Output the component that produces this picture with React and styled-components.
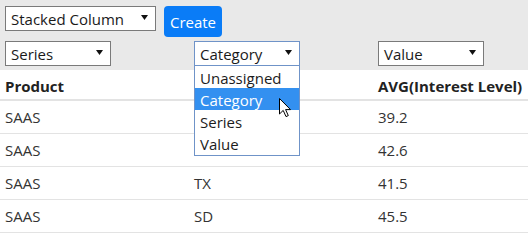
import React from 'react';
import styled, { createGlobalStyle } from 'styled-components';

const GlobalStyle = createGlobalStyle`
  body {
    margin: 0;
    font-family: "Open Sans", "Noto Sans", "Liberation Sans", sans-serif;
    background: #fff;
  }
`;

const rows = [
  ['SAAS', 'CA', '39.2'],
  ['SAAS', 'NY', '42.6'],
  ['SAAS', 'TX', '41.5'],
  ['SAAS', 'SD', '45.5'],
];

const options = ['Unassigned', 'Category', 'Series', 'Value'];

function SelectBox({ value, width, focused, open }) {
  return (
    <Holder>
      <Select $width={width} $focused={focused}>
        <span>{value}</span>
        <svg width="7" height="5" viewBox="0 0 7 5">
          <polygon points="0,0 7,0 3.5,5" fill="#111" />
        </svg>
      </Select>
      {open && (
        <OptionList>
          {options.map((o) => (
            <Option key={o} $active={o === value}>
              {o}
            </Option>
          ))}
        </OptionList>
      )}
    </Holder>
  );
}

function App() {
  return (
    <Page>
      <GlobalStyle />
      <Toolbar>
        <ToolRow>
          <SelectBox value="Stacked Column" width={151} />
          <CreateBtn>Create</CreateBtn>
        </ToolRow>
        <FieldRow>
          <SelectBox value="Series" width={106} />
          <SelectBox value="Category" width={106} focused open />
          <SelectBox value="Value" width={106} />
        </FieldRow>
      </Toolbar>
      <Table>
        <HeadCell>Product</HeadCell>
        <HeadCell />
        <HeadCell>AVG(Interest Level)</HeadCell>
        {rows.map((r, i) =>
          r.map((c, j) => <Cell key={i + '-' + j}>{c}</Cell>)
        )}
      </Table>
      <Cursor width="13" height="20" viewBox="0 0 13 20">
        <path
          d="M0.5,0.5 L0.5,16 L4.2,12.4 L7,18.6 L9.3,17.6 L6.6,11.6 L11.5,11.6 Z"
          fill="#fff"
          stroke="#000"
          strokeWidth="1"
          strokeLinejoin="round"
        />
      </Cursor>
    </Page>
  );
}

const Page = styled.div`
  position: relative;
  width: 528px;
  height: 236px;
  overflow: hidden;
`;

const Toolbar = styled.div`
  background: #e9e9e9;
  padding: 6px 5px 4px;
`;

const ToolRow = styled.div`
  display: flex;
  align-items: flex-start;
  gap: 8px;
`;

const FieldRow = styled.div`
  display: grid;
  grid-template-columns: 189px 184px 1fr;
  margin-top: 4px;
`;

const Holder = styled.div`
  position: relative;
`;

const Select = styled.div`
  box-sizing: border-box;
  width: ${(p) => p.$width}px;
  height: 25px;
  border: 1px solid ${(p) => (p.$focused ? '#6f93c8' : '#7a7a7a')};
  background: #fff;
  display: flex;
  align-items: center;
  justify-content: space-between;
  padding: 0 7px 0 5px;
  font-size: 15px;
  color: #1a1a1a;

  svg {
    margin-bottom: 2px;
  }
`;

const OptionList = styled.div`
  position: absolute;
  top: 100%;
  left: 0;
  width: 106px;
  box-sizing: border-box;
  border: 1px solid #6f93c8;
  border-top: none;
  background: #fff;
  z-index: 5;
  padding-bottom: 1px;
`;

const Option = styled.div`
  height: 22px;
  line-height: 24px;
  padding-left: 5px;
  font-size: 15px;
  color: ${(p) => (p.$active ? '#fff' : '#1c1c1c')};
  background: ${(p) => (p.$active ? '#3390f0' : 'transparent')};
`;

const CreateBtn = styled.button`
  width: 58px;
  height: 31px;
  border: none;
  border-radius: 4px;
  background: #0a7cf7;
  color: #fff;
  font-family: inherit;
  font-size: 15px;
  padding: 0;
`;

const Table = styled.div`
  display: grid;
  grid-template-columns: 189px 184px 1fr;
`;

const HeadCell = styled.div`
  height: 31px;
  padding: 2px 0 0 5px;
  box-sizing: border-box;
  display: flex;
  align-items: center;
  font-size: 15px;
  font-weight: 700;
  color: #222;
  border-bottom: 2px solid #e3e3e3;
  white-space: nowrap;
`;

const Cell = styled.div`
  height: 33px;
  box-sizing: border-box;
  padding-left: 5px;
  display: flex;
  align-items: center;
  font-size: 15px;
  color: #333;
  border-bottom: 1px solid #e3e3e3;
`;

const Cursor = styled.svg`
  position: absolute;
  left: 279px;
  top: 98px;
  z-index: 10;
`;

export default App;
